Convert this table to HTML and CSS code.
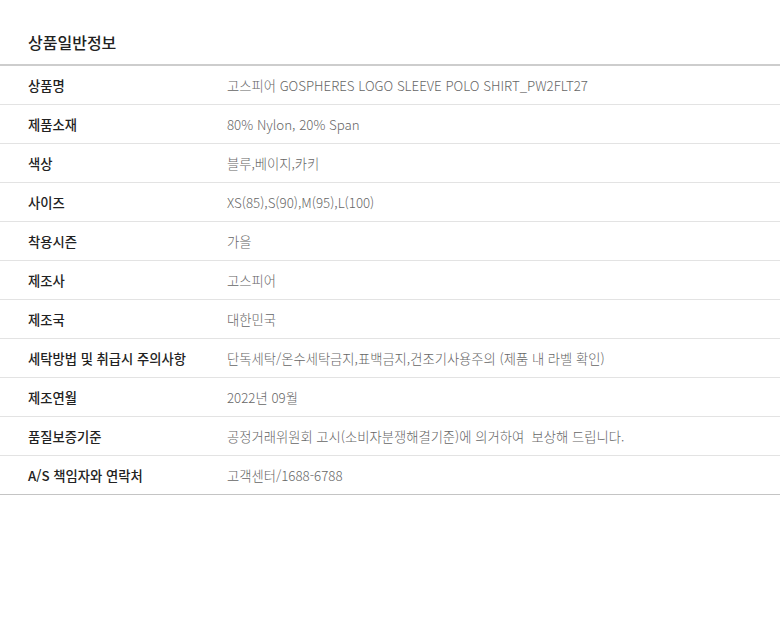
FILE: index.html
```html
<!DOCTYPE html>
<html lang="ko">
<head>
<meta charset="utf-8">
<link rel="stylesheet" href="styles.css">
</head>
<body>
<section class="info">
  <h2 class="info-title">상품일반정보</h2>
  <dl class="info-table">
    <div class="row"><dt>상품명</dt><dd>고스피어 GOSPHERES LOGO SLEEVE POLO SHIRT_PW2FLT27</dd></div>
    <div class="row"><dt>제품소재</dt><dd>80% Nylon, 20% Span</dd></div>
    <div class="row"><dt>색상</dt><dd>블루,베이지,카키</dd></div>
    <div class="row"><dt>사이즈</dt><dd>XS(85),S(90),M(95),L(100)</dd></div>
    <div class="row"><dt>착용시즌</dt><dd>가을</dd></div>
    <div class="row"><dt>제조사</dt><dd>고스피어</dd></div>
    <div class="row"><dt>제조국</dt><dd>대한민국</dd></div>
    <div class="row"><dt>세탁방법 및 취급시 주의사항</dt><dd>단독세탁/온수세탁금지,표백금지,건조기사용주의 (제품 내 라벨 확인)</dd></div>
    <div class="row"><dt>제조연월</dt><dd>2022년 09월</dd></div>
    <div class="row"><dt>품질보증기준</dt><dd>공정거래위원회 고시(소비자분쟁해결기준)에 의거하여&nbsp; 보상해 드립니다.</dd></div>
    <div class="row"><dt>A/S 책임자와 연락처</dt><dd>고객센터/1688-6788</dd></div>
  </dl>
</section>
</body>
</html>
```
FILE: styles.css
```css
html, body {
  margin: 0;
  padding: 0;
  background: #fff;
}
body {
  font-family: "Noto Sans CJK KR", "Noto Sans", sans-serif;
  color: #222;
}
.info-title {
  margin: 0;
  padding: 30px 28px 0;
  height: 34px;
  font-size: 16px;
  line-height: 24px;
  font-weight: 500;
  color: #222;
  border-bottom: 2px solid #cdcdcd;
}
.info-table {
  margin: 0;
  padding: 0;
}
.row {
  display: grid;
  grid-template-columns: 199px 1fr;
  height: 38px;
  align-items: center;
  padding-left: 28px;
  border-bottom: 1px solid #e3e3e3;
}
.row:last-child {
  border-bottom-color: #c4c4c4;
}
dt {
  font-size: 13.3px;
  font-weight: 500;
  color: #222;
}
dd {
  margin: 0;
  font-size: 13.3px;
  font-weight: 300;
  color: #666;
}
```
